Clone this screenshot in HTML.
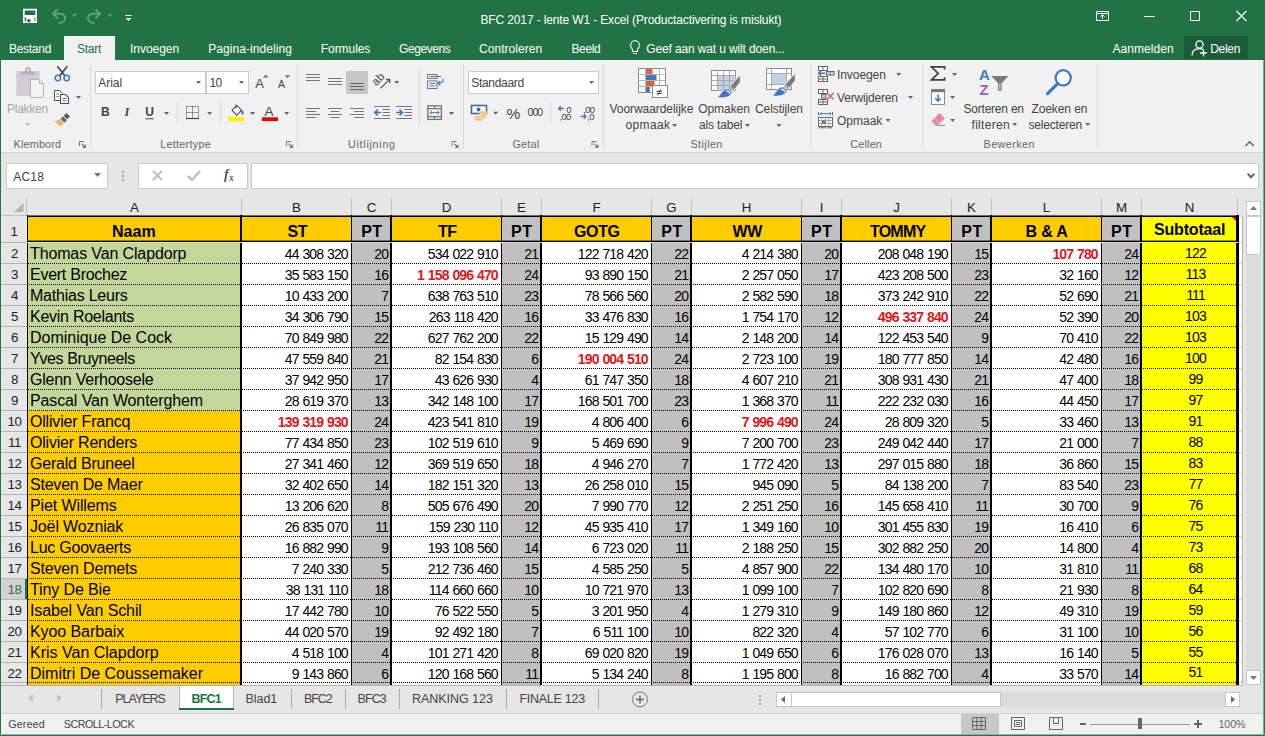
<!DOCTYPE html>
<html lang="nl"><head><meta charset="utf-8"><title>BFC 2017 - lente W1 - Excel</title>
<style>
html,body{margin:0;padding:0}
body{width:1265px;height:736px;overflow:hidden;background:#e6e6e6;font-family:"Liberation Sans",sans-serif}
#w{position:relative;width:1265px;height:736px;overflow:hidden;background:#e6e6e6}
#w section{position:absolute;left:0;top:0;width:1265px;height:736px}
#w div,#w svg,#w span{position:absolute;display:block}
.t{white-space:pre}
.serif{font-family:"Liberation Serif",serif}
.nu{letter-spacing:-0.85px;word-spacing:0.75px}
.n{letter-spacing:-0.35px}
.nm{letter-spacing:-0.1px}
.hb{letter-spacing:-0.2px}
.dot{background:repeating-linear-gradient(90deg,#000 0,#000 1px,transparent 1px,transparent 2px)}
.d2{background:repeating-linear-gradient(90deg,transparent 0,transparent 1px,#000 1px,#000 2px)}
</style></head>
<body><div id="w">
<section id="titlebar-and-ribbon">
<div style="left:0px;top:0px;width:1265px;height:60px;background:#217346;"></div>
<div style="left:64px;top:36px;width:51px;height:24px;background:#f1f1f1;"></div>
<div style="left:1184px;top:36px;width:64px;height:23px;background:#1a5c38;"></div>
<div style="left:0px;top:60px;width:1265px;height:92px;background:#f1f1f1;"></div>
<div style="left:0px;top:152px;width:1265px;height:1px;background:#d4d4d4;"></div>
<span class="t " style="top:12px;font-size:12px;line-height:16px;color:#fff;letter-spacing:-0.137px;left:480.50px;">BFC 2017 - lente W1 - Excel (Productactivering is mislukt)</span>
<span class="t " style="top:41px;font-size:12px;line-height:16px;color:#fff;letter-spacing:-0.285px;left:9.00px;">Bestand</span>
<span class="t " style="top:41px;font-size:12px;line-height:16px;color:#217346;letter-spacing:-0.259px;left:77.00px;">Start</span>
<span class="t " style="top:41px;font-size:12px;line-height:16px;color:#fff;letter-spacing:-0.043px;left:130.00px;">Invoegen</span>
<span class="t " style="top:41px;font-size:12px;line-height:16px;color:#fff;letter-spacing:0.071px;left:208.25px;">Pagina-indeling</span>
<span class="t " style="top:41px;font-size:12px;line-height:16px;color:#fff;letter-spacing:-0.058px;left:320.75px;">Formules</span>
<span class="t " style="top:41px;font-size:12px;line-height:16px;color:#fff;letter-spacing:-0.425px;left:399.00px;">Gegevens</span>
<span class="t " style="top:41px;font-size:12px;line-height:16px;color:#fff;letter-spacing:0.054px;left:479.00px;">Controleren</span>
<span class="t " style="top:41px;font-size:12px;line-height:16px;color:#fff;letter-spacing:-0.381px;left:571.50px;">Beeld</span>
<span class="t " style="top:41px;font-size:12px;line-height:16px;color:#fff;letter-spacing:-0.131px;left:646.25px;">Geef aan wat u wilt doen...</span>
<span class="t " style="top:41px;font-size:12px;line-height:16px;color:#fff;letter-spacing:0.065px;left:1112.50px;">Aanmelden</span>
<span class="t " style="top:41px;font-size:12px;line-height:16px;color:#fff;letter-spacing:-0.312px;left:1210.25px;">Delen</span>
<div style="left:90px;top:64px;width:1px;height:84px;background:#d8d8d8;"></div>
<div style="left:297px;top:64px;width:1px;height:84px;background:#d8d8d8;"></div>
<div style="left:463px;top:64px;width:1px;height:84px;background:#d8d8d8;"></div>
<div style="left:603px;top:64px;width:1px;height:84px;background:#d8d8d8;"></div>
<div style="left:810px;top:64px;width:1px;height:84px;background:#d8d8d8;"></div>
<div style="left:922px;top:64px;width:1px;height:84px;background:#d8d8d8;"></div>
<div style="left:1097px;top:64px;width:1px;height:84px;background:#d8d8d8;"></div>
<div style="left:177px;top:102px;width:1px;height:21px;background:#d8d8d8;"></div>
<div style="left:220px;top:102px;width:1px;height:21px;background:#d8d8d8;"></div>
<div style="left:419px;top:70px;width:1px;height:55px;background:#d8d8d8;"></div>
<div style="left:550px;top:102px;width:1px;height:21px;background:#d8d8d8;"></div>
<span class="t " style="top:137px;font-size:10.8px;line-height:14px;color:#666;letter-spacing:0.198px;left:13.50px;">Klembord</span>
<span class="t " style="top:137px;font-size:10.8px;line-height:14px;color:#666;letter-spacing:0.277px;left:160.20px;">Lettertype</span>
<span class="t " style="top:137px;font-size:10.8px;line-height:14px;color:#666;letter-spacing:0.699px;left:348.00px;">Uitlijning</span>
<span class="t " style="top:137px;font-size:10.8px;line-height:14px;color:#666;letter-spacing:0.198px;left:512.50px;">Getal</span>
<span class="t " style="top:137px;font-size:10.8px;line-height:14px;color:#666;letter-spacing:0.411px;left:690.50px;">Stijlen</span>
<span class="t " style="top:137px;font-size:10.8px;line-height:14px;color:#666;letter-spacing:0.198px;left:850.25px;">Cellen</span>
<span class="t " style="top:137px;font-size:10.8px;line-height:14px;color:#666;letter-spacing:0.436px;left:983.50px;">Bewerken</span>
<span class="t " style="top:101px;font-size:12px;line-height:16px;color:#a6a6a6;letter-spacing:-0.272px;left:7.00px;">Plakken</span>
<span class="t " style="top:101px;font-size:12px;line-height:16px;color:#444;letter-spacing:-0.061px;left:609.50px;">Voorwaardelijke</span>
<span class="t " style="top:117px;font-size:12px;line-height:16px;color:#444;letter-spacing:0.349px;left:625.50px;">opmaak</span>
<span class="t " style="top:101px;font-size:12px;line-height:16px;color:#444;letter-spacing:-0.069px;left:698.25px;">Opmaken</span>
<span class="t " style="top:117px;font-size:12px;line-height:16px;color:#444;letter-spacing:-0.156px;left:699.00px;">als tabel</span>
<span class="t " style="top:101px;font-size:12px;line-height:16px;color:#444;letter-spacing:-0.089px;left:755.00px;">Celstijlen</span>
<span class="t " style="top:67px;font-size:12px;line-height:16px;color:#444;letter-spacing:-0.074px;left:837.00px;">Invoegen</span>
<span class="t " style="top:90px;font-size:12px;line-height:16px;color:#444;letter-spacing:-0.173px;left:837.00px;">Verwijderen</span>
<span class="t " style="top:113px;font-size:12px;line-height:16px;color:#444;letter-spacing:-0.010px;left:837.00px;">Opmaak</span>
<span class="t " style="top:101px;font-size:12px;line-height:16px;color:#444;letter-spacing:-0.220px;left:963.50px;">Sorteren en</span>
<span class="t " style="top:117px;font-size:12px;line-height:16px;color:#444;letter-spacing:0.296px;left:971.50px;">filteren</span>
<span class="t " style="top:101px;font-size:12px;line-height:16px;color:#444;letter-spacing:-0.102px;left:1031.50px;">Zoeken en</span>
<span class="t " style="top:117px;font-size:12px;line-height:16px;color:#444;letter-spacing:-0.178px;left:1028.50px;">selecteren</span>
<div style="left:95px;top:71px;width:109px;height:21px;background:#fff;border:1px solid #cbcbcb;"></div>
<div style="left:206px;top:71px;width:41px;height:21px;background:#fff;border:1px solid #cbcbcb;"></div>
<div style="left:468px;top:71px;width:129px;height:21px;background:#fff;border:1px solid #cbcbcb;"></div>
<span class="t " style="top:75px;font-size:12px;line-height:16px;color:#444;letter-spacing:-0.043px;left:98.25px;">Arial</span>
<span class="t " style="top:75px;font-size:12px;line-height:16px;color:#444;letter-spacing:-0.655px;left:209.50px;">10</span>
<span class="t " style="top:75px;font-size:12px;line-height:16px;color:#444;letter-spacing:-0.316px;left:471.25px;">Standaard</span>
<svg style="left:196.2px;top:81.3px" width="5" height="3" viewBox="0 0 5 3"><path d="M0 0H5L2.5 3Z" fill="#666"/></svg>
<svg style="left:239.2px;top:81.3px" width="5" height="3" viewBox="0 0 5 3"><path d="M0 0H5L2.5 3Z" fill="#666"/></svg>
<svg style="left:589.0px;top:81.3px" width="5" height="3" viewBox="0 0 5 3"><path d="M0 0H5L2.5 3Z" fill="#666"/></svg>
</section>
<section id="formula-bar">
<div style="left:6px;top:163px;width:100px;height:24px;background:#fff;border:1px solid #cbcbcb;"></div>
<div style="left:138px;top:163px;width:108px;height:24px;background:#fff;border:1px solid #cbcbcb;"></div>
<div style="left:251px;top:163px;width:1006px;height:24px;background:#fff;border:1px solid #cbcbcb;"></div>
<span class="t " style="top:169px;font-size:12px;line-height:16px;color:#444;letter-spacing:0.192px;left:13.25px;">AC18</span>
<svg style="left:94.0px;top:173.0px" width="7" height="4" viewBox="0 0 7 4"><path d="M0 0H7L3.5 4Z" fill="#777"/></svg>
<div style="left:122px;top:171px;width:2px;height:2px;background:#a9a9a9;"></div>
<div style="left:122px;top:175px;width:2px;height:2px;background:#a9a9a9;"></div>
<div style="left:122px;top:179px;width:2px;height:2px;background:#a9a9a9;"></div>
<svg style="left:152px;top:170px" width="11" height="11" viewBox="0 0 11 11"><path d="M1 1L10 10M10 1L1 10" stroke="#bdbdbd" stroke-width="1.9" fill="none"/></svg>
<svg style="left:187px;top:170px" width="14" height="11" viewBox="0 0 14 11"><path d="M1 6L5 10L13 1" stroke="#c2c2c2" stroke-width="2.5" fill="none"/></svg>
<span class="t serif" style="top:166px;font-size:14px;line-height:18px;color:#555;font-weight:700;font-style:italic;left:224.00px;">f</span>
<span class="t serif" style="top:172px;font-size:9.5px;line-height:12px;color:#555;font-weight:700;font-style:italic;left:229.00px;">x</span>
<svg style="left:1247px;top:173px" width="8" height="6" viewBox="0 0 8 6"><path d="M0.7 0.7L4 4.2L7.3 0.7" stroke="#666" stroke-width="2" fill="none"/></svg>
</section>
<section id="worksheet-grid">
<div style="left:26px;top:198px;width:1px;height:18px;background:#c3c3c3;"></div>
<div style="left:241px;top:198px;width:1px;height:18px;background:#c3c3c3;"></div>
<div style="left:351px;top:198px;width:1px;height:18px;background:#c3c3c3;"></div>
<div style="left:391px;top:198px;width:1px;height:18px;background:#c3c3c3;"></div>
<div style="left:501px;top:198px;width:1px;height:18px;background:#c3c3c3;"></div>
<div style="left:541px;top:198px;width:1px;height:18px;background:#c3c3c3;"></div>
<div style="left:651px;top:198px;width:1px;height:18px;background:#c3c3c3;"></div>
<div style="left:691px;top:198px;width:1px;height:18px;background:#c3c3c3;"></div>
<div style="left:801px;top:198px;width:1px;height:18px;background:#c3c3c3;"></div>
<div style="left:841px;top:198px;width:1px;height:18px;background:#c3c3c3;"></div>
<div style="left:951px;top:198px;width:1px;height:18px;background:#c3c3c3;"></div>
<div style="left:991px;top:198px;width:1px;height:18px;background:#c3c3c3;"></div>
<div style="left:1101px;top:198px;width:1px;height:18px;background:#c3c3c3;"></div>
<div style="left:1141px;top:198px;width:1px;height:18px;background:#c3c3c3;"></div>
<div style="left:1237px;top:198px;width:1px;height:18px;background:#c3c3c3;"></div>
<span class="t " style="top:199px;font-size:13.33px;line-height:17px;color:#222;left:-65.50px;width:400px;text-align:center;">A</span>
<span class="t " style="top:199px;font-size:13.33px;line-height:17px;color:#222;left:96.50px;width:400px;text-align:center;">B</span>
<span class="t " style="top:199px;font-size:13.33px;line-height:17px;color:#222;left:171.50px;width:400px;text-align:center;">C</span>
<span class="t " style="top:199px;font-size:13.33px;line-height:17px;color:#222;left:246.50px;width:400px;text-align:center;">D</span>
<span class="t " style="top:199px;font-size:13.33px;line-height:17px;color:#222;left:321.50px;width:400px;text-align:center;">E</span>
<span class="t " style="top:199px;font-size:13.33px;line-height:17px;color:#222;left:396.50px;width:400px;text-align:center;">F</span>
<span class="t " style="top:199px;font-size:13.33px;line-height:17px;color:#222;left:471.50px;width:400px;text-align:center;">G</span>
<span class="t " style="top:199px;font-size:13.33px;line-height:17px;color:#222;left:546.50px;width:400px;text-align:center;">H</span>
<span class="t " style="top:199px;font-size:13.33px;line-height:17px;color:#222;left:621.50px;width:400px;text-align:center;">I</span>
<span class="t " style="top:199px;font-size:13.33px;line-height:17px;color:#222;left:696.50px;width:400px;text-align:center;">J</span>
<span class="t " style="top:199px;font-size:13.33px;line-height:17px;color:#222;left:771.50px;width:400px;text-align:center;">K</span>
<span class="t " style="top:199px;font-size:13.33px;line-height:17px;color:#222;left:846.50px;width:400px;text-align:center;">L</span>
<span class="t " style="top:199px;font-size:13.33px;line-height:17px;color:#222;left:921.50px;width:400px;text-align:center;">M</span>
<span class="t " style="top:199px;font-size:13.33px;line-height:17px;color:#222;left:989.50px;width:400px;text-align:center;">N</span>
<svg style="left:14px;top:203px" width="9.5" height="9" viewBox="0 0 9.5 9"><path d="M9.5 0V9H0Z" fill="#b4b4b4"/></svg>
<div style="left:28px;top:217px;width:1214px;height:468px;background:#fff;"></div>
<div style="left:1242px;top:216px;width:1px;height:469px;background:#b0b0b0;"></div>
<div style="left:1239px;top:242px;width:3px;height:1px;background:#d4d4d4;"></div>
<div style="left:1239px;top:263px;width:3px;height:1px;background:#d4d4d4;"></div>
<div style="left:1239px;top:284px;width:3px;height:1px;background:#d4d4d4;"></div>
<div style="left:1239px;top:305px;width:3px;height:1px;background:#d4d4d4;"></div>
<div style="left:1239px;top:326px;width:3px;height:1px;background:#d4d4d4;"></div>
<div style="left:1239px;top:347px;width:3px;height:1px;background:#d4d4d4;"></div>
<div style="left:1239px;top:368px;width:3px;height:1px;background:#d4d4d4;"></div>
<div style="left:1239px;top:389px;width:3px;height:1px;background:#d4d4d4;"></div>
<div style="left:1239px;top:410px;width:3px;height:1px;background:#d4d4d4;"></div>
<div style="left:1239px;top:431px;width:3px;height:1px;background:#d4d4d4;"></div>
<div style="left:1239px;top:452px;width:3px;height:1px;background:#d4d4d4;"></div>
<div style="left:1239px;top:473px;width:3px;height:1px;background:#d4d4d4;"></div>
<div style="left:1239px;top:494px;width:3px;height:1px;background:#d4d4d4;"></div>
<div style="left:1239px;top:515px;width:3px;height:1px;background:#d4d4d4;"></div>
<div style="left:1239px;top:536px;width:3px;height:1px;background:#d4d4d4;"></div>
<div style="left:1239px;top:557px;width:3px;height:1px;background:#d4d4d4;"></div>
<div style="left:1239px;top:578px;width:3px;height:1px;background:#d4d4d4;"></div>
<div style="left:1239px;top:599px;width:3px;height:1px;background:#d4d4d4;"></div>
<div style="left:1239px;top:620px;width:3px;height:1px;background:#d4d4d4;"></div>
<div style="left:1239px;top:641px;width:3px;height:1px;background:#d4d4d4;"></div>
<div style="left:1239px;top:662px;width:3px;height:1px;background:#d4d4d4;"></div>
<div style="left:1239px;top:682px;width:3px;height:1px;background:#d4d4d4;"></div>
<div style="left:28px;top:217px;width:214px;height:25px;background:#ffcc00;"></div>
<div style="left:242px;top:217px;width:110px;height:25px;background:#ffcc00;"></div>
<div style="left:352px;top:217px;width:40px;height:25px;background:#c0c0c0;"></div>
<div style="left:392px;top:217px;width:110px;height:25px;background:#ffcc00;"></div>
<div style="left:502px;top:217px;width:40px;height:25px;background:#c0c0c0;"></div>
<div style="left:542px;top:217px;width:110px;height:25px;background:#ffcc00;"></div>
<div style="left:652px;top:217px;width:40px;height:25px;background:#c0c0c0;"></div>
<div style="left:692px;top:217px;width:110px;height:25px;background:#ffcc00;"></div>
<div style="left:802px;top:217px;width:40px;height:25px;background:#c0c0c0;"></div>
<div style="left:842px;top:217px;width:110px;height:25px;background:#ffcc00;"></div>
<div style="left:952px;top:217px;width:40px;height:25px;background:#c0c0c0;"></div>
<div style="left:992px;top:217px;width:110px;height:25px;background:#ffcc00;"></div>
<div style="left:1102px;top:217px;width:40px;height:25px;background:#c0c0c0;"></div>
<div style="left:1142px;top:217px;width:96px;height:25px;background:#ffff00;"></div>
<div style="left:28px;top:243px;width:214px;height:168px;background:#c4d79b;"></div>
<div style="left:28px;top:411px;width:214px;height:274px;background:#ffcc00;"></div>
<div style="left:352px;top:243px;width:40px;height:442px;background:#c0c0c0;"></div>
<div style="left:502px;top:243px;width:40px;height:442px;background:#c0c0c0;"></div>
<div style="left:652px;top:243px;width:40px;height:442px;background:#c0c0c0;"></div>
<div style="left:802px;top:243px;width:40px;height:442px;background:#c0c0c0;"></div>
<div style="left:952px;top:243px;width:40px;height:442px;background:#c0c0c0;"></div>
<div style="left:1102px;top:243px;width:40px;height:442px;background:#c0c0c0;"></div>
<div style="left:1142px;top:243px;width:96px;height:442px;background:#ffff00;"></div>
<div style="left:28px;top:242px;width:1210px;height:1px;background:rgba(255,255,255,.45);"></div>
<div class="dot" style="left:28px;top:263px;width:1208px;height:1px"></div>
<div class="dot d2" style="left:28px;top:284px;width:1208px;height:1px"></div>
<div class="dot" style="left:28px;top:305px;width:1208px;height:1px"></div>
<div class="dot d2" style="left:28px;top:326px;width:1208px;height:1px"></div>
<div class="dot" style="left:28px;top:347px;width:1208px;height:1px"></div>
<div class="dot d2" style="left:28px;top:368px;width:1208px;height:1px"></div>
<div class="dot" style="left:28px;top:389px;width:1208px;height:1px"></div>
<div class="dot d2" style="left:28px;top:410px;width:1208px;height:1px"></div>
<div class="dot" style="left:28px;top:431px;width:1208px;height:1px"></div>
<div class="dot d2" style="left:28px;top:452px;width:1208px;height:1px"></div>
<div class="dot" style="left:28px;top:473px;width:1208px;height:1px"></div>
<div class="dot d2" style="left:28px;top:494px;width:1208px;height:1px"></div>
<div class="dot" style="left:28px;top:515px;width:1208px;height:1px"></div>
<div class="dot d2" style="left:28px;top:536px;width:1208px;height:1px"></div>
<div class="dot" style="left:28px;top:557px;width:1208px;height:1px"></div>
<div class="dot d2" style="left:28px;top:578px;width:1208px;height:1px"></div>
<div class="dot" style="left:28px;top:599px;width:1208px;height:1px"></div>
<div class="dot d2" style="left:28px;top:620px;width:1208px;height:1px"></div>
<div class="dot" style="left:28px;top:641px;width:1208px;height:1px"></div>
<div class="dot d2" style="left:28px;top:662px;width:1208px;height:1px"></div>
<div class="dot d2" style="left:28px;top:682px;width:1208px;height:1px"></div>
<div style="left:27px;top:216px;width:1212px;height:1px;background:#000;"></div>
<div style="left:27px;top:215px;width:1212px;height:1px;background:rgba(0,0,0,.55);"></div>
<div style="left:27px;top:241px;width:1212px;height:1px;background:#000;"></div>
<div style="left:27px;top:240px;width:1212px;height:1px;background:rgba(0,0,0,.4);"></div>
<div style="left:27px;top:215px;width:1px;height:470px;background:#000;"></div>
<div style="left:240px;top:215px;width:2px;height:470px;background:#000;"></div>
<div style="left:351px;top:215px;width:1px;height:470px;background:#000;"></div>
<div style="left:390px;top:215px;width:2px;height:470px;background:#000;"></div>
<div style="left:501px;top:215px;width:1px;height:470px;background:#000;"></div>
<div style="left:540px;top:215px;width:2px;height:470px;background:#000;"></div>
<div style="left:651px;top:215px;width:1px;height:470px;background:#000;"></div>
<div style="left:690px;top:215px;width:2px;height:470px;background:#000;"></div>
<div style="left:801px;top:215px;width:1px;height:470px;background:#000;"></div>
<div style="left:840px;top:215px;width:2px;height:470px;background:#000;"></div>
<div style="left:951px;top:215px;width:1px;height:470px;background:#000;"></div>
<div style="left:990px;top:215px;width:2px;height:470px;background:#000;"></div>
<div style="left:1101px;top:215px;width:1px;height:470px;background:#000;"></div>
<div style="left:1140px;top:215px;width:2px;height:470px;background:#000;"></div>
<div style="left:1236px;top:215px;width:3px;height:470px;background:#000;"></div>
<div style="left:27px;top:242px;width:215px;height:1px;background:#c4d79b;"></div>
<div style="left:242px;top:242px;width:110px;height:1px;background:#fff;"></div>
<div style="left:352px;top:242px;width:40px;height:1px;background:#c0c0c0;"></div>
<div style="left:392px;top:242px;width:110px;height:1px;background:#fff;"></div>
<div style="left:502px;top:242px;width:40px;height:1px;background:#c0c0c0;"></div>
<div style="left:542px;top:242px;width:110px;height:1px;background:#fff;"></div>
<div style="left:652px;top:242px;width:40px;height:1px;background:#c0c0c0;"></div>
<div style="left:692px;top:242px;width:110px;height:1px;background:#fff;"></div>
<div style="left:802px;top:242px;width:40px;height:1px;background:#c0c0c0;"></div>
<div style="left:842px;top:242px;width:110px;height:1px;background:#fff;"></div>
<div style="left:952px;top:242px;width:40px;height:1px;background:#c0c0c0;"></div>
<div style="left:992px;top:242px;width:110px;height:1px;background:#fff;"></div>
<div style="left:1102px;top:242px;width:40px;height:1px;background:#c0c0c0;"></div>
<div style="left:1142px;top:242px;width:96px;height:1px;background:#ffff00;"></div>
<div style="left:27px;top:242px;width:1212px;height:1px;background:rgba(255,255,255,.3);"></div>
<svg style="left:1232px;top:217px" width="4" height="4" viewBox="0 0 4 4"><path d="M0 0H4V4Z" fill="#e00000"/></svg>
<div style="left:1px;top:215px;width:26px;height:1px;background:#c3c3c3;"></div>
<div style="left:1px;top:242px;width:26px;height:1px;background:#b4b4b4;"></div>
<div style="left:1px;top:263px;width:26px;height:1px;background:#b4b4b4;"></div>
<div style="left:1px;top:284px;width:26px;height:1px;background:#b4b4b4;"></div>
<div style="left:1px;top:305px;width:26px;height:1px;background:#b4b4b4;"></div>
<div style="left:1px;top:326px;width:26px;height:1px;background:#b4b4b4;"></div>
<div style="left:1px;top:347px;width:26px;height:1px;background:#b4b4b4;"></div>
<div style="left:1px;top:368px;width:26px;height:1px;background:#b4b4b4;"></div>
<div style="left:1px;top:389px;width:26px;height:1px;background:#b4b4b4;"></div>
<div style="left:1px;top:410px;width:26px;height:1px;background:#b4b4b4;"></div>
<div style="left:1px;top:431px;width:26px;height:1px;background:#b4b4b4;"></div>
<div style="left:1px;top:452px;width:26px;height:1px;background:#b4b4b4;"></div>
<div style="left:1px;top:473px;width:26px;height:1px;background:#b4b4b4;"></div>
<div style="left:1px;top:494px;width:26px;height:1px;background:#b4b4b4;"></div>
<div style="left:1px;top:515px;width:26px;height:1px;background:#b4b4b4;"></div>
<div style="left:1px;top:536px;width:26px;height:1px;background:#b4b4b4;"></div>
<div style="left:1px;top:557px;width:26px;height:1px;background:#b4b4b4;"></div>
<div style="left:1px;top:578px;width:26px;height:1px;background:#b4b4b4;"></div>
<div style="left:1px;top:599px;width:26px;height:1px;background:#b4b4b4;"></div>
<div style="left:1px;top:620px;width:26px;height:1px;background:#b4b4b4;"></div>
<div style="left:1px;top:641px;width:26px;height:1px;background:#b4b4b4;"></div>
<div style="left:1px;top:662px;width:26px;height:1px;background:#b4b4b4;"></div>
<div style="left:1px;top:682px;width:26px;height:1px;background:#b4b4b4;"></div>
<div style="left:1px;top:685px;width:26px;height:1px;background:#b4b4b4;"></div>
<div style="left:1px;top:579px;width:26px;height:20px;background:#d2d2d2;"></div>
<div style="left:25px;top:579px;width:2px;height:20px;background:#217346;"></div>
<span class="t n" style="top:223px;font-size:13.33px;line-height:17px;color:#222;left:-186.00px;width:400px;text-align:center;">1</span>
<span class="t n" style="top:245px;font-size:13.33px;line-height:17px;color:#222;left:-185.50px;width:400px;text-align:center;">2</span>
<span class="t n" style="top:266px;font-size:13.33px;line-height:17px;color:#222;left:-185.50px;width:400px;text-align:center;">3</span>
<span class="t n" style="top:287px;font-size:13.33px;line-height:17px;color:#222;left:-185.50px;width:400px;text-align:center;">4</span>
<span class="t n" style="top:308px;font-size:13.33px;line-height:17px;color:#222;left:-185.50px;width:400px;text-align:center;">5</span>
<span class="t n" style="top:329px;font-size:13.33px;line-height:17px;color:#222;left:-185.50px;width:400px;text-align:center;">6</span>
<span class="t n" style="top:350px;font-size:13.33px;line-height:17px;color:#222;left:-185.50px;width:400px;text-align:center;">7</span>
<span class="t n" style="top:371px;font-size:13.33px;line-height:17px;color:#222;left:-185.50px;width:400px;text-align:center;">8</span>
<span class="t n" style="top:392px;font-size:13.33px;line-height:17px;color:#222;left:-185.50px;width:400px;text-align:center;">9</span>
<span class="t n" style="top:413px;font-size:13.33px;line-height:17px;color:#222;left:-185.50px;width:400px;text-align:center;">10</span>
<span class="t n" style="top:434px;font-size:13.33px;line-height:17px;color:#222;left:-185.50px;width:400px;text-align:center;">11</span>
<span class="t n" style="top:455px;font-size:13.33px;line-height:17px;color:#222;left:-185.50px;width:400px;text-align:center;">12</span>
<span class="t n" style="top:476px;font-size:13.33px;line-height:17px;color:#222;left:-185.50px;width:400px;text-align:center;">13</span>
<span class="t n" style="top:497px;font-size:13.33px;line-height:17px;color:#222;left:-185.50px;width:400px;text-align:center;">14</span>
<span class="t n" style="top:518px;font-size:13.33px;line-height:17px;color:#222;left:-185.50px;width:400px;text-align:center;">15</span>
<span class="t n" style="top:539px;font-size:13.33px;line-height:17px;color:#222;left:-185.50px;width:400px;text-align:center;">16</span>
<span class="t n" style="top:560px;font-size:13.33px;line-height:17px;color:#222;left:-185.50px;width:400px;text-align:center;">17</span>
<span class="t n" style="top:581px;font-size:13.33px;line-height:17px;color:#217346;left:-185.50px;width:400px;text-align:center;">18</span>
<span class="t n" style="top:602px;font-size:13.33px;line-height:17px;color:#222;left:-185.50px;width:400px;text-align:center;">19</span>
<span class="t n" style="top:623px;font-size:13.33px;line-height:17px;color:#222;left:-185.50px;width:400px;text-align:center;">20</span>
<span class="t n" style="top:644px;font-size:13.33px;line-height:17px;color:#222;left:-185.50px;width:400px;text-align:center;">21</span>
<span class="t n" style="top:665px;font-size:13.33px;line-height:17px;color:#222;left:-185.50px;width:400px;text-align:center;">22</span>
<span class="t " style="top:221px;font-size:16px;line-height:21px;color:#000;font-weight:700;letter-spacing:0.055px;left:111.90px;">Naam</span>
<span class="t " style="top:221px;font-size:16px;line-height:21px;color:#000;font-weight:700;letter-spacing:-0.327px;left:287.50px;">ST</span>
<span class="t " style="top:221px;font-size:16px;line-height:21px;color:#000;font-weight:700;letter-spacing:0.423px;left:361.20px;">PT</span>
<span class="t " style="top:221px;font-size:16px;line-height:21px;color:#000;font-weight:700;letter-spacing:-0.623px;left:438.10px;">TF</span>
<span class="t " style="top:221px;font-size:16px;line-height:21px;color:#000;font-weight:700;letter-spacing:0.523px;left:511.10px;">PT</span>
<span class="t " style="top:221px;font-size:16px;line-height:21px;color:#000;font-weight:700;letter-spacing:-0.352px;left:574.00px;">GOTG</span>
<span class="t " style="top:221px;font-size:16px;line-height:21px;color:#000;font-weight:700;letter-spacing:0.523px;left:661.20px;">PT</span>
<span class="t " style="top:221px;font-size:16px;line-height:21px;color:#000;font-weight:700;letter-spacing:-0.252px;left:732.40px;">WW</span>
<span class="t " style="top:221px;font-size:16px;line-height:21px;color:#000;font-weight:700;letter-spacing:0.573px;left:811.00px;">PT</span>
<span class="t " style="top:221px;font-size:16px;line-height:21px;color:#000;font-weight:700;letter-spacing:-0.793px;left:870.00px;">TOMMY</span>
<span class="t " style="top:221px;font-size:16px;line-height:21px;color:#000;font-weight:700;letter-spacing:0.523px;left:961.20px;">PT</span>
<span class="t " style="top:221px;font-size:16px;line-height:21px;color:#000;font-weight:700;letter-spacing:-0.174px;left:1025.50px;">B &amp; A</span>
<span class="t " style="top:221px;font-size:16px;line-height:21px;color:#000;font-weight:700;letter-spacing:0.573px;left:1111.00px;">PT</span>
<span class="t " style="top:219px;font-size:16px;line-height:21px;color:#000;font-weight:700;letter-spacing:-0.177px;left:1154.00px;">Subtotaal</span>
<span class="t " style="top:243px;font-size:16px;line-height:21px;color:#000;letter-spacing:-0.132px;left:30.00px;">Thomas Van Clapdorp</span>
<span class="t nu" style="top:245px;font-size:14px;line-height:18px;color:#000;right:917.20px;">44 308 320</span>
<span class="t nu" style="top:245px;font-size:14px;line-height:18px;color:#000;right:876.80px;">20</span>
<span class="t nu" style="top:245px;font-size:14px;line-height:18px;color:#000;right:767.20px;">534 022 910</span>
<span class="t nu" style="top:245px;font-size:14px;line-height:18px;color:#000;right:726.80px;">21</span>
<span class="t nu" style="top:245px;font-size:14px;line-height:18px;color:#000;right:617.20px;">122 718 420</span>
<span class="t nu" style="top:245px;font-size:14px;line-height:18px;color:#000;right:576.80px;">22</span>
<span class="t nu" style="top:245px;font-size:14px;line-height:18px;color:#000;right:467.20px;">4 214 380</span>
<span class="t nu" style="top:245px;font-size:14px;line-height:18px;color:#000;right:426.80px;">20</span>
<span class="t nu" style="top:245px;font-size:14px;line-height:18px;color:#000;right:317.20px;">208 048 190</span>
<span class="t nu" style="top:245px;font-size:14px;line-height:18px;color:#000;right:276.80px;">15</span>
<span class="t nu" style="top:245px;font-size:14px;line-height:18px;color:#dc1822;font-weight:700;right:167.20px;">107 780</span>
<span class="t nu" style="top:245px;font-size:14px;line-height:18px;color:#000;right:126.80px;">24</span>
<span class="t nu" style="top:244px;font-size:14px;line-height:18px;color:#000;left:995.50px;width:400px;text-align:center;">122</span>
<span class="t " style="top:264px;font-size:16px;line-height:21px;color:#000;letter-spacing:-0.260px;left:30.00px;">Evert Brochez</span>
<span class="t nu" style="top:266px;font-size:14px;line-height:18px;color:#000;right:917.20px;">35 583 150</span>
<span class="t nu" style="top:266px;font-size:14px;line-height:18px;color:#000;right:876.80px;">16</span>
<span class="t nu" style="top:266px;font-size:14px;line-height:18px;color:#dc1822;font-weight:700;right:767.20px;">1 158 096 470</span>
<span class="t nu" style="top:266px;font-size:14px;line-height:18px;color:#000;right:726.80px;">24</span>
<span class="t nu" style="top:266px;font-size:14px;line-height:18px;color:#000;right:617.20px;">93 890 150</span>
<span class="t nu" style="top:266px;font-size:14px;line-height:18px;color:#000;right:576.80px;">21</span>
<span class="t nu" style="top:266px;font-size:14px;line-height:18px;color:#000;right:467.20px;">2 257 050</span>
<span class="t nu" style="top:266px;font-size:14px;line-height:18px;color:#000;right:426.80px;">17</span>
<span class="t nu" style="top:266px;font-size:14px;line-height:18px;color:#000;right:317.20px;">423 208 500</span>
<span class="t nu" style="top:266px;font-size:14px;line-height:18px;color:#000;right:276.80px;">23</span>
<span class="t nu" style="top:266px;font-size:14px;line-height:18px;color:#000;right:167.20px;">32 160</span>
<span class="t nu" style="top:266px;font-size:14px;line-height:18px;color:#000;right:126.80px;">12</span>
<span class="t nu" style="top:265px;font-size:14px;line-height:18px;color:#000;left:995.50px;width:400px;text-align:center;">113</span>
<span class="t " style="top:285px;font-size:16px;line-height:21px;color:#000;letter-spacing:-0.223px;left:30.00px;">Mathias Leurs</span>
<span class="t nu" style="top:287px;font-size:14px;line-height:18px;color:#000;right:917.20px;">10 433 200</span>
<span class="t nu" style="top:287px;font-size:14px;line-height:18px;color:#000;right:876.80px;">7</span>
<span class="t nu" style="top:287px;font-size:14px;line-height:18px;color:#000;right:767.20px;">638 763 510</span>
<span class="t nu" style="top:287px;font-size:14px;line-height:18px;color:#000;right:726.80px;">23</span>
<span class="t nu" style="top:287px;font-size:14px;line-height:18px;color:#000;right:617.20px;">78 566 560</span>
<span class="t nu" style="top:287px;font-size:14px;line-height:18px;color:#000;right:576.80px;">20</span>
<span class="t nu" style="top:287px;font-size:14px;line-height:18px;color:#000;right:467.20px;">2 582 590</span>
<span class="t nu" style="top:287px;font-size:14px;line-height:18px;color:#000;right:426.80px;">18</span>
<span class="t nu" style="top:287px;font-size:14px;line-height:18px;color:#000;right:317.20px;">373 242 910</span>
<span class="t nu" style="top:287px;font-size:14px;line-height:18px;color:#000;right:276.80px;">22</span>
<span class="t nu" style="top:287px;font-size:14px;line-height:18px;color:#000;right:167.20px;">52 690</span>
<span class="t nu" style="top:287px;font-size:14px;line-height:18px;color:#000;right:126.80px;">21</span>
<span class="t nu" style="top:286px;font-size:14px;line-height:18px;color:#000;left:995.50px;width:400px;text-align:center;">111</span>
<span class="t " style="top:306px;font-size:16px;line-height:21px;color:#000;letter-spacing:-0.259px;left:30.00px;">Kevin Roelants</span>
<span class="t nu" style="top:308px;font-size:14px;line-height:18px;color:#000;right:917.20px;">34 306 790</span>
<span class="t nu" style="top:308px;font-size:14px;line-height:18px;color:#000;right:876.80px;">15</span>
<span class="t nu" style="top:308px;font-size:14px;line-height:18px;color:#000;right:767.20px;">263 118 420</span>
<span class="t nu" style="top:308px;font-size:14px;line-height:18px;color:#000;right:726.80px;">16</span>
<span class="t nu" style="top:308px;font-size:14px;line-height:18px;color:#000;right:617.20px;">33 476 830</span>
<span class="t nu" style="top:308px;font-size:14px;line-height:18px;color:#000;right:576.80px;">16</span>
<span class="t nu" style="top:308px;font-size:14px;line-height:18px;color:#000;right:467.20px;">1 754 170</span>
<span class="t nu" style="top:308px;font-size:14px;line-height:18px;color:#000;right:426.80px;">12</span>
<span class="t nu" style="top:308px;font-size:14px;line-height:18px;color:#dc1822;font-weight:700;right:317.20px;">496 337 840</span>
<span class="t nu" style="top:308px;font-size:14px;line-height:18px;color:#000;right:276.80px;">24</span>
<span class="t nu" style="top:308px;font-size:14px;line-height:18px;color:#000;right:167.20px;">52 390</span>
<span class="t nu" style="top:308px;font-size:14px;line-height:18px;color:#000;right:126.80px;">20</span>
<span class="t nu" style="top:307px;font-size:14px;line-height:18px;color:#000;left:995.50px;width:400px;text-align:center;">103</span>
<span class="t " style="top:327px;font-size:16px;line-height:21px;color:#000;letter-spacing:-0.017px;left:30.00px;">Dominique De Cock</span>
<span class="t nu" style="top:329px;font-size:14px;line-height:18px;color:#000;right:917.20px;">70 849 980</span>
<span class="t nu" style="top:329px;font-size:14px;line-height:18px;color:#000;right:876.80px;">22</span>
<span class="t nu" style="top:329px;font-size:14px;line-height:18px;color:#000;right:767.20px;">627 762 200</span>
<span class="t nu" style="top:329px;font-size:14px;line-height:18px;color:#000;right:726.80px;">22</span>
<span class="t nu" style="top:329px;font-size:14px;line-height:18px;color:#000;right:617.20px;">15 129 490</span>
<span class="t nu" style="top:329px;font-size:14px;line-height:18px;color:#000;right:576.80px;">14</span>
<span class="t nu" style="top:329px;font-size:14px;line-height:18px;color:#000;right:467.20px;">2 148 200</span>
<span class="t nu" style="top:329px;font-size:14px;line-height:18px;color:#000;right:426.80px;">14</span>
<span class="t nu" style="top:329px;font-size:14px;line-height:18px;color:#000;right:317.20px;">122 453 540</span>
<span class="t nu" style="top:329px;font-size:14px;line-height:18px;color:#000;right:276.80px;">9</span>
<span class="t nu" style="top:329px;font-size:14px;line-height:18px;color:#000;right:167.20px;">70 410</span>
<span class="t nu" style="top:329px;font-size:14px;line-height:18px;color:#000;right:126.80px;">22</span>
<span class="t nu" style="top:328px;font-size:14px;line-height:18px;color:#000;left:995.50px;width:400px;text-align:center;">103</span>
<span class="t " style="top:348px;font-size:16px;line-height:21px;color:#000;letter-spacing:-0.392px;left:30.00px;">Yves Bruyneels</span>
<span class="t nu" style="top:350px;font-size:14px;line-height:18px;color:#000;right:917.20px;">47 559 840</span>
<span class="t nu" style="top:350px;font-size:14px;line-height:18px;color:#000;right:876.80px;">21</span>
<span class="t nu" style="top:350px;font-size:14px;line-height:18px;color:#000;right:767.20px;">82 154 830</span>
<span class="t nu" style="top:350px;font-size:14px;line-height:18px;color:#000;right:726.80px;">6</span>
<span class="t nu" style="top:350px;font-size:14px;line-height:18px;color:#dc1822;font-weight:700;right:617.20px;">190 004 510</span>
<span class="t nu" style="top:350px;font-size:14px;line-height:18px;color:#000;right:576.80px;">24</span>
<span class="t nu" style="top:350px;font-size:14px;line-height:18px;color:#000;right:467.20px;">2 723 100</span>
<span class="t nu" style="top:350px;font-size:14px;line-height:18px;color:#000;right:426.80px;">19</span>
<span class="t nu" style="top:350px;font-size:14px;line-height:18px;color:#000;right:317.20px;">180 777 850</span>
<span class="t nu" style="top:350px;font-size:14px;line-height:18px;color:#000;right:276.80px;">14</span>
<span class="t nu" style="top:350px;font-size:14px;line-height:18px;color:#000;right:167.20px;">42 480</span>
<span class="t nu" style="top:350px;font-size:14px;line-height:18px;color:#000;right:126.80px;">16</span>
<span class="t nu" style="top:349px;font-size:14px;line-height:18px;color:#000;left:995.50px;width:400px;text-align:center;">100</span>
<span class="t " style="top:369px;font-size:16px;line-height:21px;color:#000;letter-spacing:-0.238px;left:30.00px;">Glenn Verhoosele</span>
<span class="t nu" style="top:371px;font-size:14px;line-height:18px;color:#000;right:917.20px;">37 942 950</span>
<span class="t nu" style="top:371px;font-size:14px;line-height:18px;color:#000;right:876.80px;">17</span>
<span class="t nu" style="top:371px;font-size:14px;line-height:18px;color:#000;right:767.20px;">43 626 930</span>
<span class="t nu" style="top:371px;font-size:14px;line-height:18px;color:#000;right:726.80px;">4</span>
<span class="t nu" style="top:371px;font-size:14px;line-height:18px;color:#000;right:617.20px;">61 747 350</span>
<span class="t nu" style="top:371px;font-size:14px;line-height:18px;color:#000;right:576.80px;">18</span>
<span class="t nu" style="top:371px;font-size:14px;line-height:18px;color:#000;right:467.20px;">4 607 210</span>
<span class="t nu" style="top:371px;font-size:14px;line-height:18px;color:#000;right:426.80px;">21</span>
<span class="t nu" style="top:371px;font-size:14px;line-height:18px;color:#000;right:317.20px;">308 931 430</span>
<span class="t nu" style="top:371px;font-size:14px;line-height:18px;color:#000;right:276.80px;">21</span>
<span class="t nu" style="top:371px;font-size:14px;line-height:18px;color:#000;right:167.20px;">47 400</span>
<span class="t nu" style="top:371px;font-size:14px;line-height:18px;color:#000;right:126.80px;">18</span>
<span class="t nu" style="top:370px;font-size:14px;line-height:18px;color:#000;left:995.50px;width:400px;text-align:center;">99</span>
<span class="t " style="top:390px;font-size:16px;line-height:21px;color:#000;letter-spacing:-0.119px;left:30.00px;">Pascal Van Wonterghem</span>
<span class="t nu" style="top:392px;font-size:14px;line-height:18px;color:#000;right:917.20px;">28 619 370</span>
<span class="t nu" style="top:392px;font-size:14px;line-height:18px;color:#000;right:876.80px;">13</span>
<span class="t nu" style="top:392px;font-size:14px;line-height:18px;color:#000;right:767.20px;">342 148 100</span>
<span class="t nu" style="top:392px;font-size:14px;line-height:18px;color:#000;right:726.80px;">17</span>
<span class="t nu" style="top:392px;font-size:14px;line-height:18px;color:#000;right:617.20px;">168 501 700</span>
<span class="t nu" style="top:392px;font-size:14px;line-height:18px;color:#000;right:576.80px;">23</span>
<span class="t nu" style="top:392px;font-size:14px;line-height:18px;color:#000;right:467.20px;">1 368 370</span>
<span class="t nu" style="top:392px;font-size:14px;line-height:18px;color:#000;right:426.80px;">11</span>
<span class="t nu" style="top:392px;font-size:14px;line-height:18px;color:#000;right:317.20px;">222 232 030</span>
<span class="t nu" style="top:392px;font-size:14px;line-height:18px;color:#000;right:276.80px;">16</span>
<span class="t nu" style="top:392px;font-size:14px;line-height:18px;color:#000;right:167.20px;">44 450</span>
<span class="t nu" style="top:392px;font-size:14px;line-height:18px;color:#000;right:126.80px;">17</span>
<span class="t nu" style="top:391px;font-size:14px;line-height:18px;color:#000;left:995.50px;width:400px;text-align:center;">97</span>
<span class="t " style="top:411px;font-size:16px;line-height:21px;color:#000;letter-spacing:-0.196px;left:30.00px;">Ollivier Francq</span>
<span class="t nu" style="top:413px;font-size:14px;line-height:18px;color:#dc1822;font-weight:700;right:917.20px;">139 319 930</span>
<span class="t nu" style="top:413px;font-size:14px;line-height:18px;color:#000;right:876.80px;">24</span>
<span class="t nu" style="top:413px;font-size:14px;line-height:18px;color:#000;right:767.20px;">423 541 810</span>
<span class="t nu" style="top:413px;font-size:14px;line-height:18px;color:#000;right:726.80px;">19</span>
<span class="t nu" style="top:413px;font-size:14px;line-height:18px;color:#000;right:617.20px;">4 806 400</span>
<span class="t nu" style="top:413px;font-size:14px;line-height:18px;color:#000;right:576.80px;">6</span>
<span class="t nu" style="top:413px;font-size:14px;line-height:18px;color:#dc1822;font-weight:700;right:467.20px;">7 996 490</span>
<span class="t nu" style="top:413px;font-size:14px;line-height:18px;color:#000;right:426.80px;">24</span>
<span class="t nu" style="top:413px;font-size:14px;line-height:18px;color:#000;right:317.20px;">28 809 320</span>
<span class="t nu" style="top:413px;font-size:14px;line-height:18px;color:#000;right:276.80px;">5</span>
<span class="t nu" style="top:413px;font-size:14px;line-height:18px;color:#000;right:167.20px;">33 460</span>
<span class="t nu" style="top:413px;font-size:14px;line-height:18px;color:#000;right:126.80px;">13</span>
<span class="t nu" style="top:412px;font-size:14px;line-height:18px;color:#000;left:995.50px;width:400px;text-align:center;">91</span>
<span class="t " style="top:432px;font-size:16px;line-height:21px;color:#000;letter-spacing:-0.211px;left:30.00px;">Olivier Renders</span>
<span class="t nu" style="top:434px;font-size:14px;line-height:18px;color:#000;right:917.20px;">77 434 850</span>
<span class="t nu" style="top:434px;font-size:14px;line-height:18px;color:#000;right:876.80px;">23</span>
<span class="t nu" style="top:434px;font-size:14px;line-height:18px;color:#000;right:767.20px;">102 519 610</span>
<span class="t nu" style="top:434px;font-size:14px;line-height:18px;color:#000;right:726.80px;">9</span>
<span class="t nu" style="top:434px;font-size:14px;line-height:18px;color:#000;right:617.20px;">5 469 690</span>
<span class="t nu" style="top:434px;font-size:14px;line-height:18px;color:#000;right:576.80px;">9</span>
<span class="t nu" style="top:434px;font-size:14px;line-height:18px;color:#000;right:467.20px;">7 200 700</span>
<span class="t nu" style="top:434px;font-size:14px;line-height:18px;color:#000;right:426.80px;">23</span>
<span class="t nu" style="top:434px;font-size:14px;line-height:18px;color:#000;right:317.20px;">249 042 440</span>
<span class="t nu" style="top:434px;font-size:14px;line-height:18px;color:#000;right:276.80px;">17</span>
<span class="t nu" style="top:434px;font-size:14px;line-height:18px;color:#000;right:167.20px;">21 000</span>
<span class="t nu" style="top:434px;font-size:14px;line-height:18px;color:#000;right:126.80px;">7</span>
<span class="t nu" style="top:433px;font-size:14px;line-height:18px;color:#000;left:995.50px;width:400px;text-align:center;">88</span>
<span class="t " style="top:453px;font-size:16px;line-height:21px;color:#000;letter-spacing:-0.216px;left:30.00px;">Gerald Bruneel</span>
<span class="t nu" style="top:455px;font-size:14px;line-height:18px;color:#000;right:917.20px;">27 341 460</span>
<span class="t nu" style="top:455px;font-size:14px;line-height:18px;color:#000;right:876.80px;">12</span>
<span class="t nu" style="top:455px;font-size:14px;line-height:18px;color:#000;right:767.20px;">369 519 650</span>
<span class="t nu" style="top:455px;font-size:14px;line-height:18px;color:#000;right:726.80px;">18</span>
<span class="t nu" style="top:455px;font-size:14px;line-height:18px;color:#000;right:617.20px;">4 946 270</span>
<span class="t nu" style="top:455px;font-size:14px;line-height:18px;color:#000;right:576.80px;">7</span>
<span class="t nu" style="top:455px;font-size:14px;line-height:18px;color:#000;right:467.20px;">1 772 420</span>
<span class="t nu" style="top:455px;font-size:14px;line-height:18px;color:#000;right:426.80px;">13</span>
<span class="t nu" style="top:455px;font-size:14px;line-height:18px;color:#000;right:317.20px;">297 015 880</span>
<span class="t nu" style="top:455px;font-size:14px;line-height:18px;color:#000;right:276.80px;">18</span>
<span class="t nu" style="top:455px;font-size:14px;line-height:18px;color:#000;right:167.20px;">36 860</span>
<span class="t nu" style="top:455px;font-size:14px;line-height:18px;color:#000;right:126.80px;">15</span>
<span class="t nu" style="top:454px;font-size:14px;line-height:18px;color:#000;left:995.50px;width:400px;text-align:center;">83</span>
<span class="t " style="top:474px;font-size:16px;line-height:21px;color:#000;letter-spacing:-0.215px;left:30.00px;">Steven De Maer</span>
<span class="t nu" style="top:476px;font-size:14px;line-height:18px;color:#000;right:917.20px;">32 402 650</span>
<span class="t nu" style="top:476px;font-size:14px;line-height:18px;color:#000;right:876.80px;">14</span>
<span class="t nu" style="top:476px;font-size:14px;line-height:18px;color:#000;right:767.20px;">182 151 320</span>
<span class="t nu" style="top:476px;font-size:14px;line-height:18px;color:#000;right:726.80px;">13</span>
<span class="t nu" style="top:476px;font-size:14px;line-height:18px;color:#000;right:617.20px;">26 258 010</span>
<span class="t nu" style="top:476px;font-size:14px;line-height:18px;color:#000;right:576.80px;">15</span>
<span class="t nu" style="top:476px;font-size:14px;line-height:18px;color:#000;right:467.20px;">945 090</span>
<span class="t nu" style="top:476px;font-size:14px;line-height:18px;color:#000;right:426.80px;">5</span>
<span class="t nu" style="top:476px;font-size:14px;line-height:18px;color:#000;right:317.20px;">84 138 200</span>
<span class="t nu" style="top:476px;font-size:14px;line-height:18px;color:#000;right:276.80px;">7</span>
<span class="t nu" style="top:476px;font-size:14px;line-height:18px;color:#000;right:167.20px;">83 540</span>
<span class="t nu" style="top:476px;font-size:14px;line-height:18px;color:#000;right:126.80px;">23</span>
<span class="t nu" style="top:475px;font-size:14px;line-height:18px;color:#000;left:995.50px;width:400px;text-align:center;">77</span>
<span class="t " style="top:495px;font-size:16px;line-height:21px;color:#000;letter-spacing:-0.110px;left:30.00px;">Piet Willems</span>
<span class="t nu" style="top:497px;font-size:14px;line-height:18px;color:#000;right:917.20px;">13 206 620</span>
<span class="t nu" style="top:497px;font-size:14px;line-height:18px;color:#000;right:876.80px;">8</span>
<span class="t nu" style="top:497px;font-size:14px;line-height:18px;color:#000;right:767.20px;">505 676 490</span>
<span class="t nu" style="top:497px;font-size:14px;line-height:18px;color:#000;right:726.80px;">20</span>
<span class="t nu" style="top:497px;font-size:14px;line-height:18px;color:#000;right:617.20px;">7 990 770</span>
<span class="t nu" style="top:497px;font-size:14px;line-height:18px;color:#000;right:576.80px;">12</span>
<span class="t nu" style="top:497px;font-size:14px;line-height:18px;color:#000;right:467.20px;">2 251 250</span>
<span class="t nu" style="top:497px;font-size:14px;line-height:18px;color:#000;right:426.80px;">16</span>
<span class="t nu" style="top:497px;font-size:14px;line-height:18px;color:#000;right:317.20px;">145 658 410</span>
<span class="t nu" style="top:497px;font-size:14px;line-height:18px;color:#000;right:276.80px;">11</span>
<span class="t nu" style="top:497px;font-size:14px;line-height:18px;color:#000;right:167.20px;">30 700</span>
<span class="t nu" style="top:497px;font-size:14px;line-height:18px;color:#000;right:126.80px;">9</span>
<span class="t nu" style="top:496px;font-size:14px;line-height:18px;color:#000;left:995.50px;width:400px;text-align:center;">76</span>
<span class="t " style="top:516px;font-size:16px;line-height:21px;color:#000;letter-spacing:-0.138px;left:30.00px;">Joël Wozniak</span>
<span class="t nu" style="top:518px;font-size:14px;line-height:18px;color:#000;right:917.20px;">26 835 070</span>
<span class="t nu" style="top:518px;font-size:14px;line-height:18px;color:#000;right:876.80px;">11</span>
<span class="t nu" style="top:518px;font-size:14px;line-height:18px;color:#000;right:767.20px;">159 230 110</span>
<span class="t nu" style="top:518px;font-size:14px;line-height:18px;color:#000;right:726.80px;">12</span>
<span class="t nu" style="top:518px;font-size:14px;line-height:18px;color:#000;right:617.20px;">45 935 410</span>
<span class="t nu" style="top:518px;font-size:14px;line-height:18px;color:#000;right:576.80px;">17</span>
<span class="t nu" style="top:518px;font-size:14px;line-height:18px;color:#000;right:467.20px;">1 349 160</span>
<span class="t nu" style="top:518px;font-size:14px;line-height:18px;color:#000;right:426.80px;">10</span>
<span class="t nu" style="top:518px;font-size:14px;line-height:18px;color:#000;right:317.20px;">301 455 830</span>
<span class="t nu" style="top:518px;font-size:14px;line-height:18px;color:#000;right:276.80px;">19</span>
<span class="t nu" style="top:518px;font-size:14px;line-height:18px;color:#000;right:167.20px;">16 410</span>
<span class="t nu" style="top:518px;font-size:14px;line-height:18px;color:#000;right:126.80px;">6</span>
<span class="t nu" style="top:517px;font-size:14px;line-height:18px;color:#000;left:995.50px;width:400px;text-align:center;">75</span>
<span class="t " style="top:537px;font-size:16px;line-height:21px;color:#000;letter-spacing:-0.243px;left:30.00px;">Luc Goovaerts</span>
<span class="t nu" style="top:539px;font-size:14px;line-height:18px;color:#000;right:917.20px;">16 882 990</span>
<span class="t nu" style="top:539px;font-size:14px;line-height:18px;color:#000;right:876.80px;">9</span>
<span class="t nu" style="top:539px;font-size:14px;line-height:18px;color:#000;right:767.20px;">193 108 560</span>
<span class="t nu" style="top:539px;font-size:14px;line-height:18px;color:#000;right:726.80px;">14</span>
<span class="t nu" style="top:539px;font-size:14px;line-height:18px;color:#000;right:617.20px;">6 723 020</span>
<span class="t nu" style="top:539px;font-size:14px;line-height:18px;color:#000;right:576.80px;">11</span>
<span class="t nu" style="top:539px;font-size:14px;line-height:18px;color:#000;right:467.20px;">2 188 250</span>
<span class="t nu" style="top:539px;font-size:14px;line-height:18px;color:#000;right:426.80px;">15</span>
<span class="t nu" style="top:539px;font-size:14px;line-height:18px;color:#000;right:317.20px;">302 882 250</span>
<span class="t nu" style="top:539px;font-size:14px;line-height:18px;color:#000;right:276.80px;">20</span>
<span class="t nu" style="top:539px;font-size:14px;line-height:18px;color:#000;right:167.20px;">14 800</span>
<span class="t nu" style="top:539px;font-size:14px;line-height:18px;color:#000;right:126.80px;">4</span>
<span class="t nu" style="top:538px;font-size:14px;line-height:18px;color:#000;left:995.50px;width:400px;text-align:center;">73</span>
<span class="t " style="top:558px;font-size:16px;line-height:21px;color:#000;letter-spacing:-0.176px;left:30.00px;">Steven Demets</span>
<span class="t nu" style="top:560px;font-size:14px;line-height:18px;color:#000;right:917.20px;">7 240 330</span>
<span class="t nu" style="top:560px;font-size:14px;line-height:18px;color:#000;right:876.80px;">5</span>
<span class="t nu" style="top:560px;font-size:14px;line-height:18px;color:#000;right:767.20px;">212 736 460</span>
<span class="t nu" style="top:560px;font-size:14px;line-height:18px;color:#000;right:726.80px;">15</span>
<span class="t nu" style="top:560px;font-size:14px;line-height:18px;color:#000;right:617.20px;">4 585 250</span>
<span class="t nu" style="top:560px;font-size:14px;line-height:18px;color:#000;right:576.80px;">5</span>
<span class="t nu" style="top:560px;font-size:14px;line-height:18px;color:#000;right:467.20px;">4 857 900</span>
<span class="t nu" style="top:560px;font-size:14px;line-height:18px;color:#000;right:426.80px;">22</span>
<span class="t nu" style="top:560px;font-size:14px;line-height:18px;color:#000;right:317.20px;">134 480 170</span>
<span class="t nu" style="top:560px;font-size:14px;line-height:18px;color:#000;right:276.80px;">10</span>
<span class="t nu" style="top:560px;font-size:14px;line-height:18px;color:#000;right:167.20px;">31 810</span>
<span class="t nu" style="top:560px;font-size:14px;line-height:18px;color:#000;right:126.80px;">11</span>
<span class="t nu" style="top:559px;font-size:14px;line-height:18px;color:#000;left:995.50px;width:400px;text-align:center;">68</span>
<span class="t " style="top:579px;font-size:16px;line-height:21px;color:#000;letter-spacing:-0.119px;left:30.00px;">Tiny De Bie</span>
<span class="t nu" style="top:581px;font-size:14px;line-height:18px;color:#000;right:917.20px;">38 131 110</span>
<span class="t nu" style="top:581px;font-size:14px;line-height:18px;color:#000;right:876.80px;">18</span>
<span class="t nu" style="top:581px;font-size:14px;line-height:18px;color:#000;right:767.20px;">114 660 660</span>
<span class="t nu" style="top:581px;font-size:14px;line-height:18px;color:#000;right:726.80px;">10</span>
<span class="t nu" style="top:581px;font-size:14px;line-height:18px;color:#000;right:617.20px;">10 721 970</span>
<span class="t nu" style="top:581px;font-size:14px;line-height:18px;color:#000;right:576.80px;">13</span>
<span class="t nu" style="top:581px;font-size:14px;line-height:18px;color:#000;right:467.20px;">1 099 100</span>
<span class="t nu" style="top:581px;font-size:14px;line-height:18px;color:#000;right:426.80px;">7</span>
<span class="t nu" style="top:581px;font-size:14px;line-height:18px;color:#000;right:317.20px;">102 820 690</span>
<span class="t nu" style="top:581px;font-size:14px;line-height:18px;color:#000;right:276.80px;">8</span>
<span class="t nu" style="top:581px;font-size:14px;line-height:18px;color:#000;right:167.20px;">21 930</span>
<span class="t nu" style="top:581px;font-size:14px;line-height:18px;color:#000;right:126.80px;">8</span>
<span class="t nu" style="top:580px;font-size:14px;line-height:18px;color:#000;left:995.50px;width:400px;text-align:center;">64</span>
<span class="t " style="top:600px;font-size:16px;line-height:21px;color:#000;letter-spacing:-0.109px;left:30.00px;">Isabel Van Schil</span>
<span class="t nu" style="top:602px;font-size:14px;line-height:18px;color:#000;right:917.20px;">17 442 780</span>
<span class="t nu" style="top:602px;font-size:14px;line-height:18px;color:#000;right:876.80px;">10</span>
<span class="t nu" style="top:602px;font-size:14px;line-height:18px;color:#000;right:767.20px;">76 522 550</span>
<span class="t nu" style="top:602px;font-size:14px;line-height:18px;color:#000;right:726.80px;">5</span>
<span class="t nu" style="top:602px;font-size:14px;line-height:18px;color:#000;right:617.20px;">3 201 950</span>
<span class="t nu" style="top:602px;font-size:14px;line-height:18px;color:#000;right:576.80px;">4</span>
<span class="t nu" style="top:602px;font-size:14px;line-height:18px;color:#000;right:467.20px;">1 279 310</span>
<span class="t nu" style="top:602px;font-size:14px;line-height:18px;color:#000;right:426.80px;">9</span>
<span class="t nu" style="top:602px;font-size:14px;line-height:18px;color:#000;right:317.20px;">149 180 860</span>
<span class="t nu" style="top:602px;font-size:14px;line-height:18px;color:#000;right:276.80px;">12</span>
<span class="t nu" style="top:602px;font-size:14px;line-height:18px;color:#000;right:167.20px;">49 310</span>
<span class="t nu" style="top:602px;font-size:14px;line-height:18px;color:#000;right:126.80px;">19</span>
<span class="t nu" style="top:601px;font-size:14px;line-height:18px;color:#000;left:995.50px;width:400px;text-align:center;">59</span>
<span class="t " style="top:621px;font-size:16px;line-height:21px;color:#000;letter-spacing:-0.081px;left:30.00px;">Kyoo Barbaix</span>
<span class="t nu" style="top:623px;font-size:14px;line-height:18px;color:#000;right:917.20px;">44 020 570</span>
<span class="t nu" style="top:623px;font-size:14px;line-height:18px;color:#000;right:876.80px;">19</span>
<span class="t nu" style="top:623px;font-size:14px;line-height:18px;color:#000;right:767.20px;">92 492 180</span>
<span class="t nu" style="top:623px;font-size:14px;line-height:18px;color:#000;right:726.80px;">7</span>
<span class="t nu" style="top:623px;font-size:14px;line-height:18px;color:#000;right:617.20px;">6 511 100</span>
<span class="t nu" style="top:623px;font-size:14px;line-height:18px;color:#000;right:576.80px;">10</span>
<span class="t nu" style="top:623px;font-size:14px;line-height:18px;color:#000;right:467.20px;">822 320</span>
<span class="t nu" style="top:623px;font-size:14px;line-height:18px;color:#000;right:426.80px;">4</span>
<span class="t nu" style="top:623px;font-size:14px;line-height:18px;color:#000;right:317.20px;">57 102 770</span>
<span class="t nu" style="top:623px;font-size:14px;line-height:18px;color:#000;right:276.80px;">6</span>
<span class="t nu" style="top:623px;font-size:14px;line-height:18px;color:#000;right:167.20px;">31 100</span>
<span class="t nu" style="top:623px;font-size:14px;line-height:18px;color:#000;right:126.80px;">10</span>
<span class="t nu" style="top:622px;font-size:14px;line-height:18px;color:#000;left:995.50px;width:400px;text-align:center;">56</span>
<span class="t " style="top:642px;font-size:16px;line-height:21px;color:#000;left:30.00px;">Kris Van Clapdorp</span>
<span class="t nu" style="top:644px;font-size:14px;line-height:18px;color:#000;right:917.20px;">4 518 100</span>
<span class="t nu" style="top:644px;font-size:14px;line-height:18px;color:#000;right:876.80px;">4</span>
<span class="t nu" style="top:644px;font-size:14px;line-height:18px;color:#000;right:767.20px;">101 271 420</span>
<span class="t nu" style="top:644px;font-size:14px;line-height:18px;color:#000;right:726.80px;">8</span>
<span class="t nu" style="top:644px;font-size:14px;line-height:18px;color:#000;right:617.20px;">69 020 820</span>
<span class="t nu" style="top:644px;font-size:14px;line-height:18px;color:#000;right:576.80px;">19</span>
<span class="t nu" style="top:644px;font-size:14px;line-height:18px;color:#000;right:467.20px;">1 049 650</span>
<span class="t nu" style="top:644px;font-size:14px;line-height:18px;color:#000;right:426.80px;">6</span>
<span class="t nu" style="top:644px;font-size:14px;line-height:18px;color:#000;right:317.20px;">176 028 070</span>
<span class="t nu" style="top:644px;font-size:14px;line-height:18px;color:#000;right:276.80px;">13</span>
<span class="t nu" style="top:644px;font-size:14px;line-height:18px;color:#000;right:167.20px;">16 140</span>
<span class="t nu" style="top:644px;font-size:14px;line-height:18px;color:#000;right:126.80px;">5</span>
<span class="t nu" style="top:643px;font-size:14px;line-height:18px;color:#000;left:995.50px;width:400px;text-align:center;">55</span>
<span class="t " style="top:663px;font-size:16px;line-height:21px;color:#000;letter-spacing:-0.017px;left:30.00px;">Dimitri De Coussemaker</span>
<span class="t nu" style="top:665px;font-size:14px;line-height:18px;color:#000;right:917.20px;">9 143 860</span>
<span class="t nu" style="top:665px;font-size:14px;line-height:18px;color:#000;right:876.80px;">6</span>
<span class="t nu" style="top:665px;font-size:14px;line-height:18px;color:#000;right:767.20px;">120 168 560</span>
<span class="t nu" style="top:665px;font-size:14px;line-height:18px;color:#000;right:726.80px;">11</span>
<span class="t nu" style="top:665px;font-size:14px;line-height:18px;color:#000;right:617.20px;">5 134 240</span>
<span class="t nu" style="top:665px;font-size:14px;line-height:18px;color:#000;right:576.80px;">8</span>
<span class="t nu" style="top:665px;font-size:14px;line-height:18px;color:#000;right:467.20px;">1 195 800</span>
<span class="t nu" style="top:665px;font-size:14px;line-height:18px;color:#000;right:426.80px;">8</span>
<span class="t nu" style="top:665px;font-size:14px;line-height:18px;color:#000;right:317.20px;">16 882 700</span>
<span class="t nu" style="top:665px;font-size:14px;line-height:18px;color:#000;right:276.80px;">4</span>
<span class="t nu" style="top:665px;font-size:14px;line-height:18px;color:#000;right:167.20px;">33 570</span>
<span class="t nu" style="top:665px;font-size:14px;line-height:18px;color:#000;right:126.80px;">14</span>
<span class="t nu" style="top:663px;font-size:14px;line-height:18px;color:#000;left:995.50px;width:400px;text-align:center;">51</span>
</section>
<section id="scrollbars-sheet-tabs-statusbar">
<div style="left:1px;top:685px;width:1262px;height:1px;background:#b4b4b4;"></div>
<div style="left:1243px;top:198px;width:20px;height:488px;background:#e6e6e6;"></div>
<div style="left:1px;top:686px;width:1262px;height:27px;background:#e6e6e6;"></div>
<div style="left:1246px;top:216px;width:15px;height:454px;background:#dcdcdc;"></div>
<div style="left:792px;top:692px;width:433px;height:15px;background:#dcdcdc;"></div>
<div style="left:1246px;top:201px;width:13px;height:13px;background:#fff;border:1px solid #c6c6c6;"></div>
<svg style="left:1250px;top:206px" width="7" height="4" viewBox="0 0 7 4"><path d="M0 4H7L3.5 0Z" fill="#777"/></svg>
<div style="left:1246px;top:216px;width:13px;height:37px;background:#fff;border:1px solid #c6c6c6;"></div>
<div style="left:1246px;top:670px;width:13px;height:13px;background:#fff;border:1px solid #c6c6c6;"></div>
<svg style="left:1250px;top:676px" width="7" height="4" viewBox="0 0 7 4"><path d="M0 0H7L3.5 4Z" fill="#777"/></svg>
<div style="left:776px;top:692px;width:14px;height:13px;background:#fff;border:1px solid #c6c6c6;"></div>
<svg style="left:781px;top:696px" width="4" height="7" viewBox="0 0 4 7"><path d="M4 0V7L0 3.5Z" fill="#6a6a6a"/></svg>
<div style="left:791px;top:692px;width:208px;height:13px;background:#fff;border:1px solid #c6c6c6;"></div>
<div style="left:1225px;top:692px;width:13px;height:13px;background:#fff;border:1px solid #c6c6c6;"></div>
<svg style="left:1231px;top:696px" width="4" height="7" viewBox="0 0 4 7"><path d="M0 0V7L4 3.5Z" fill="#6a6a6a"/></svg>
<div style="left:759px;top:695px;width:2px;height:2px;background:#a9a9a9;"></div>
<div style="left:759px;top:699px;width:2px;height:2px;background:#a9a9a9;"></div>
<div style="left:759px;top:703px;width:2px;height:2px;background:#a9a9a9;"></div>
<svg style="left:28px;top:694px" width="5" height="8" viewBox="0 0 5 8"><path d="M5 0V8L0 4Z" fill="#c3c3c3"/></svg>
<svg style="left:57px;top:694px" width="5" height="8" viewBox="0 0 5 8"><path d="M0 0V8L5 4Z" fill="#c3c3c3"/></svg>
<div style="left:101px;top:689px;width:1px;height:20px;background:#ababab;"></div>
<div style="left:291px;top:689px;width:1px;height:20px;background:#ababab;"></div>
<div style="left:345px;top:689px;width:1px;height:20px;background:#ababab;"></div>
<div style="left:399px;top:689px;width:1px;height:20px;background:#ababab;"></div>
<div style="left:506px;top:689px;width:1px;height:20px;background:#ababab;"></div>
<div style="left:598px;top:689px;width:1px;height:20px;background:#ababab;"></div>
<div style="left:179px;top:686px;width:55px;height:22px;background:#b9b9b9;"></div>
<div style="left:180px;top:686px;width:53px;height:22px;background:#fff;"></div>
<div style="left:179px;top:708px;width:55px;height:2px;background:#217346;"></div>
<span class="t " style="top:691px;font-size:12.5px;line-height:16px;color:#444;letter-spacing:-1.021px;left:115.30px;">PLAYERS</span>
<span class="t " style="top:691px;font-size:12.5px;line-height:16px;color:#217346;font-weight:700;letter-spacing:-0.839px;left:191.50px;">BFC1</span>
<span class="t " style="top:691px;font-size:12.5px;line-height:16px;color:#444;letter-spacing:-0.037px;left:245.50px;">Blad1</span>
<span class="t " style="top:691px;font-size:12.5px;line-height:16px;color:#444;letter-spacing:-1.101px;left:304.00px;">BFC2</span>
<span class="t " style="top:691px;font-size:12.5px;line-height:16px;color:#444;letter-spacing:-0.913px;left:357.50px;">BFC3</span>
<span class="t " style="top:691px;font-size:12.5px;line-height:16px;color:#444;letter-spacing:-0.044px;left:412.00px;">RANKING 123</span>
<span class="t " style="top:691px;font-size:12.5px;line-height:16px;color:#444;letter-spacing:-0.279px;left:519.50px;">FINALE 123</span>
<svg style="left:631px;top:691px" width="18" height="18" viewBox="0 0 18 18"><circle cx="9" cy="8.5" r="7.5" fill="none" stroke="#777" stroke-width="1"/><path d="M9 4.5V12.5M5 8.5H13" stroke="#666" stroke-width="1.5"/></svg>
<div style="left:1px;top:713px;width:1262px;height:21px;background:#f1f1f1;"></div>
<div style="left:1px;top:713px;width:1262px;height:1px;background:#d0d0d0;"></div>
<span class="t " style="top:717px;font-size:10.8px;line-height:14px;color:#444;letter-spacing:0.089px;left:8.25px;">Gereed</span>
<span class="t " style="top:717px;font-size:10.8px;line-height:14px;color:#444;letter-spacing:-0.537px;left:63.75px;">SCROLL-LOCK</span>
<span class="t " style="top:717px;font-size:10.8px;line-height:14px;color:#666;letter-spacing:-0.144px;left:1218.50px;">100%</span>
<div style="left:961px;top:714px;width:38px;height:20px;background:#c8c8c8;"></div>
<svg style="left:972px;top:717px" width="14" height="13" viewBox="0 0 14 13"><path d="M0.5 0.5H13.5V12.5H0.5ZM0.5 4.5H13.5M0.5 8.5H13.5M4.8 0.5V12.5M9.2 0.5V12.5" fill="none" stroke="#666" stroke-width="1"/></svg>
<svg style="left:1011px;top:717px" width="14" height="13" viewBox="0 0 14 13"><path d="M0.5 0.5H13.5V12.5H0.5ZM3.5 3.5H10.5V9.5H3.5ZM5 5.5H9M5 7.5H9" fill="none" stroke="#666" stroke-width="1"/></svg>
<svg style="left:1049px;top:717px" width="14" height="13" viewBox="0 0 14 13"><path d="M0.5 0.5H13.5V12.5H0.5M0.5 12.5V0.5M4.5 0.5V6.5H9.5V0.5" fill="none" stroke="#666" stroke-width="1"/></svg>
<div style="left:1080px;top:723px;width:6px;height:2px;background:#666;"></div>
<div style="left:1090px;top:723.5px;width:100px;height:1px;background:#999;"></div>
<div style="left:1138px;top:718px;width:4px;height:11px;background:#666;"></div>
<div style="left:1194px;top:723px;width:8px;height:2px;background:#666;"></div>
<div style="left:1197px;top:720px;width:2px;height:8px;background:#666;"></div>
</section>
<section id="window-frame">
<div style="left:0px;top:60px;width:1px;height:676px;background:#217346;"></div>
<div style="left:1263px;top:60px;width:1px;height:676px;background:#7fa892;"></div>
<div style="left:1264px;top:60px;width:1px;height:676px;background:#217346;"></div>
<div style="left:0px;top:734px;width:1265px;height:1px;background:#8fb3a0;"></div>
<div style="left:0px;top:735px;width:1265px;height:1px;background:#217346;"></div>
</section>
<section id="ribbon-icons">
<svg style="left:0;top:0" width="1265" height="152" viewBox="0 0 1265 152" font-family="Liberation Sans, sans-serif"><path d="M23.85 9.65H36.15V22.15H23.85Z" fill="none" stroke="#fff" stroke-width="1.7" /><rect x="24" y="15" width="12" height="2.4" fill="#fff" /><rect x="26.2" y="17" width="8.2" height="5.5" fill="#fff" /><rect x="27.3" y="19.2" width="3.2" height="3.0" fill="#217346" /><path d="M57.5 10.5L53 15L57.5 19.5M53.5 15H60.5A4.5 4.5 0 0 1 60.5 24H58.5" fill="none" stroke="#5f9f7d" stroke-width="2.0" transform="translate(0,-1.3)"/><path d="M72.0 14.0H77.0L74.5 17.0Z" fill="#5f9f7d" /><path d="M95.5 10.5L100 15L95.5 19.5M99.5 15H92.5A4.5 4.5 0 0 0 92.5 24H94.5" fill="none" stroke="#5f9f7d" stroke-width="2.0" transform="translate(0,-1.3)"/><path d="M107.2 14.0H112.2L109.7 17.0Z" fill="#5f9f7d" /><path d="M125.5 15.5H131.5" fill="none" stroke="#fff" stroke-width="1" /><path d="M125.5 17.9H131.5L128.5 21.1Z" fill="#fff" /><path d="M1096.5 11.5H1108.5V20.5H1096.5ZM1096.5 13.5H1108.5" fill="none" stroke="#fff" stroke-width="1" /><path d="M1102.5 19V15M1100.3 16.8L1102.5 14.6L1104.7 16.8" fill="none" stroke="#fff" stroke-width="1" /><path d="M1144 16.5H1154.5" fill="none" stroke="#fff" stroke-width="1" /><rect x="1190.5" y="11.5" width="9" height="9" fill="none" stroke="#fff" stroke-width="1" /><path d="M1236.5 11L1246.5 21M1246.5 11L1236.5 21" fill="none" stroke="#fff" stroke-width="1.1" /><path d="M632.5 51.5V50C632.5 48.5 630.6 47.6 630.6 45.2A4.4 4.4 0 0 1 639.4 45.2C639.4 47.6 637.5 48.5 637.5 50V51.5ZM633 53.5H637" fill="none" stroke="#fff" stroke-width="1.1" /><circle cx="1199.5" cy="44.5" r="3.6" fill="none" stroke="#fff" stroke-width="1.3"/><path d="M1192 55.5C1192 51 1195 48.6 1199.5 48.6C1201 48.6 1202 48.9 1203 49.4" fill="none" stroke="#fff" stroke-width="1.3" /><path d="M1203.5 49.5V56.5M1200 53H1207" fill="none" stroke="#fff" stroke-width="1.3" /><rect x="16.3" y="71" width="23.4" height="24.8" fill="#cfcdd1" /><path d="M21 74.8V71.5H25.2V69.8A2.8 2.8 0 0 1 30.8 69.8V71.5H35V74.8Z" fill="#b6b4b8" /><circle cx="28" cy="70.2" r="1.1" fill="#f1f1f1"/><path d="M30.5 79.5H39.5L43.5 83.5V97.5H30.5Z" fill="#f4f2f6" stroke="#b6b4b8" stroke-width="1" /><path d="M39.5 79.5V83.5H43.5" fill="none" stroke="#b6b4b8" stroke-width="1" /><path d="M25.0 123.3H30.0L27.5 126.10000000000001Z" fill="#b4b4b4" /><path d="M57.3 66.2L65.6 76.6M67.3 66.2L59 76.6" fill="none" stroke="#505050" stroke-width="1.8" /><circle cx="57.9" cy="78" r="2.7" fill="#e4eef9" stroke="#3f78c0" stroke-width="1.4"/><circle cx="66.7" cy="78" r="2.7" fill="#e4eef9" stroke="#3f78c0" stroke-width="1.4"/><path d="M54.5 90.5H59.5L62.5 93.5V100.5H54.5Z" fill="#fff" stroke="#505050" stroke-width="1" /><path d="M60.5 94.5H65.5L68.5 97.5V103.5H60.5Z" fill="#fff" stroke="#505050" stroke-width="1.1" /><path d="M56.5 94H59M56.5 96.5H59M62.5 98.5H66.5M62.5 100.8H66.5" fill="none" stroke="#3f78c0" stroke-width="1" /><path d="M76.0 96.0H81.0L78.5 99.0Z" fill="#666" /><path d="M66.5 113L70 116.5L67.2 119.3L63.7 115.8Z" fill="#5a5a5a" /><path d="M63 116.2L67 120.2L64.4 122.8L60.4 118.8Z" fill="#6a6a6a" /><path d="M60 119.3L64 123.3L60.3 126.8L54.5 121.2Z" fill="#eab85e" /><path d="M79.5 146V141.5H84" fill="none" stroke="#777" stroke-width="1" /><path d="M81.6 143.6L84.5 146.5" fill="none" stroke="#777" stroke-width="1.1" /><path d="M86 144V148H82Z" fill="#777" /><path d="M286.5 146V141.5H291" fill="none" stroke="#777" stroke-width="1" /><path d="M288.6 143.6L291.5 146.5" fill="none" stroke="#777" stroke-width="1.1" /><path d="M293 144V148H289Z" fill="#777" /><path d="M452.0 146V141.5H456.5" fill="none" stroke="#777" stroke-width="1" /><path d="M454.1 143.6L457.0 146.5" fill="none" stroke="#777" stroke-width="1.1" /><path d="M458.5 144V148H454.5Z" fill="#777" /><path d="M592.0 146V141.5H596.5" fill="none" stroke="#777" stroke-width="1" /><path d="M594.1 143.6L597.0 146.5" fill="none" stroke="#777" stroke-width="1.1" /><path d="M598.5 144V148H594.5Z" fill="#777" /><text x="255.2" y="87.8" font-size="13" fill="#444" font-weight="400" >A</text><path d="M263 77.6H268.4L265.7 74.6Z" fill="#3f78c0" /><text x="278" y="87.8" font-size="10.5" fill="#444" font-weight="400" >A</text><path d="M284.8 75.2H290.2L287.5 78.2Z" fill="#3f78c0" /><text x="101" y="116.4" font-size="12" fill="#444" font-weight="700" >B</text><text x="124.5" y="116.4" font-size="12.5" fill="#444" font-weight="700" font-style="italic" font-family="Liberation Serif">I</text><text x="145.3" y="116.4" font-size="12" fill="#444" font-weight="700" >U</text><path d="M145.5 118.8H153.7" fill="none" stroke="#444" stroke-width="1" /><path d="M164.0 112.0H169.0L166.5 115.0Z" fill="#666" /><path d="M186.5 106.5H198.5M186.5 112.5H198.5M186.5 106.5V118M192.5 106.5V118M198.5 106.5V118" fill="none" stroke="#444" stroke-width="1" stroke-dasharray="1 1"/><path d="M186 118.5H199" fill="none" stroke="#444" stroke-width="1.2" /><path d="M207.1 112.0H212.1L209.6 115.0Z" fill="#666" /><path d="M232 110.2L236.8 105.5L241.5 110.2L236.8 115.2Z" fill="#fff" stroke="#555" stroke-width="1.1" /><path d="M236 104.6V108.5" fill="none" stroke="#555" stroke-width="1.1" /><path d="M241 109.4C243 109.8 244 112 243.6 115C242 114.6 240.6 113 241 109.4Z" fill="#3f78c0" /><rect x="228" y="116.8" width="16" height="4.4" fill="#fff200" /><path d="M250.0 112.0H255.0L252.5 115.0Z" fill="#666" /><text x="264.6" y="116.2" font-size="13.5" fill="#444" font-weight="400" >A</text><rect x="262" y="117.3" width="16" height="3.7" fill="#e60000" /><path d="M284.2 112.0H289.2L286.7 115.0Z" fill="#666" /><path d="M306 74.5H320" fill="none" stroke="#777" stroke-width="1" /><path d="M306 77.5H320" fill="none" stroke="#777" stroke-width="1" /><path d="M306 80.5H320" fill="none" stroke="#777" stroke-width="1" /><path d="M328 78.5H342" fill="none" stroke="#777" stroke-width="1" /><path d="M328 81.5H342" fill="none" stroke="#777" stroke-width="1" /><path d="M328 84.5H342" fill="none" stroke="#777" stroke-width="1" /><rect x="346" y="71" width="22" height="23" fill="#c6c6c6" /><path d="M350 83.5H364" fill="none" stroke="#666" stroke-width="1" /><path d="M350 86.5H364" fill="none" stroke="#666" stroke-width="1" /><path d="M350 89.5H364" fill="none" stroke="#666" stroke-width="1" /><text x="0" y="0" font-size="11.5" fill="#444" transform="translate(376.6,86.6) rotate(-48)">ab</text><path d="M380.5 88.4L389.5 79.4M385.8 79.2H389.7V83.2" fill="none" stroke="#444" stroke-width="1.1" /><path d="M394.2 80.9H399.2L396.7 83.9Z" fill="#666" /><rect x="427.5" y="74.5" width="9.5" height="4" fill="none" stroke="#777" stroke-width="1" /><path d="M429.5 76.5H441" fill="none" stroke="#3f78c0" stroke-width="1" /><rect x="427.5" y="81" width="9.5" height="7.5" fill="none" stroke="#777" stroke-width="1" /><path d="M429.5 83.5H435M429.5 86H435" fill="none" stroke="#3f78c0" stroke-width="1" /><path d="M443 78.5C443.6 81.5 442 83.3 438.2 83.3M440.3 81L437.8 83.3L440.3 85.6" fill="none" stroke="#3f78c0" stroke-width="1.1" /><path d="M306 108.5H320" fill="none" stroke="#777" stroke-width="1" /><path d="M328 108.5H342" fill="none" stroke="#777" stroke-width="1" /><path d="M350 108.5H364" fill="none" stroke="#777" stroke-width="1" /><path d="M306 111.5H316" fill="none" stroke="#777" stroke-width="1" /><path d="M330.5 111.5H339.5" fill="none" stroke="#777" stroke-width="1" /><path d="M354 111.5H364" fill="none" stroke="#777" stroke-width="1" /><path d="M306 114.5H320" fill="none" stroke="#777" stroke-width="1" /><path d="M328 114.5H342" fill="none" stroke="#777" stroke-width="1" /><path d="M350 114.5H364" fill="none" stroke="#777" stroke-width="1" /><path d="M306 117.5H316" fill="none" stroke="#777" stroke-width="1" /><path d="M330.5 117.5H339.5" fill="none" stroke="#777" stroke-width="1" /><path d="M354 117.5H364" fill="none" stroke="#777" stroke-width="1" /><path d="M374 106.5H390" fill="none" stroke="#777" stroke-width="1" /><path d="M374 118.5H390" fill="none" stroke="#777" stroke-width="1" /><path d="M382.5 109.5H390" fill="none" stroke="#777" stroke-width="1" /><path d="M382.5 112.5H390" fill="none" stroke="#777" stroke-width="1" /><path d="M382.5 115.5H390" fill="none" stroke="#777" stroke-width="1" /><path d="M396 106.5H412" fill="none" stroke="#777" stroke-width="1" /><path d="M396 118.5H412" fill="none" stroke="#777" stroke-width="1" /><path d="M404.5 109.5H412" fill="none" stroke="#777" stroke-width="1" /><path d="M404.5 112.5H412" fill="none" stroke="#777" stroke-width="1" /><path d="M404.5 115.5H412" fill="none" stroke="#777" stroke-width="1" /><path d="M381 112.5H374.8M377.8 109.6L374.8 112.5L377.8 115.4" fill="none" stroke="#3f78c0" stroke-width="1.7" /><path d="M396.2 112.5H402.4M399.4 109.6L402.4 112.5L399.4 115.4" fill="none" stroke="#3f78c0" stroke-width="1.7" /><rect x="427.8" y="105.8" width="13.6" height="13.6" fill="none" stroke="#777" stroke-width="1.3" /><path d="M427.8 108.6H441.4M427.8 116.6H441.4M434.6 105.8V108.6M434.6 116.6V119.4" fill="none" stroke="#777" stroke-width="1.2" /><path d="M430 112.6H439.2M431.8 110.9L430 112.6L431.8 114.3M437.4 110.9L439.2 112.6L437.4 114.3" fill="none" stroke="#3f78c0" stroke-width="1" /><path d="M449.0 112.0H454.0L451.5 115.0Z" fill="#666" /><rect x="471.5" y="105.5" width="15" height="8" fill="#fff" stroke="#3c6aa8" stroke-width="1.6" /><circle cx="478.6" cy="109.5" r="2" fill="#3c6aa8"/><ellipse cx="483" cy="112.5" rx="4.2" ry="1.5" fill="#ecc374" stroke="#f1f1f1" stroke-width="0.5"/><ellipse cx="483" cy="114.8" rx="4.2" ry="1.5" fill="#ecc374" stroke="#f1f1f1" stroke-width="0.5"/><ellipse cx="483" cy="117" rx="4.2" ry="1.5" fill="#ecc374" stroke="#f1f1f1" stroke-width="0.5"/><ellipse cx="478.5" cy="117.2" rx="4.2" ry="1.5" fill="#ecc374" stroke="#f1f1f1" stroke-width="0.5"/><ellipse cx="478.5" cy="119.5" rx="4.2" ry="1.5" fill="#ecc374" stroke="#f1f1f1" stroke-width="0.5"/><path d="M493.2 111.8H498.2L495.7 114.8Z" fill="#666" /><text x="506.6" y="118.9" font-size="15.5" fill="#444" font-weight="400" >%</text><text x="527.4" y="115.9" font-size="10.5" fill="#444" font-weight="400" letter-spacing="-0.85">000</text><text x="566.2" y="112.6" font-size="9.5" fill="#444" font-weight="400" >0</text><text x="559.6" y="120" font-size="9.5" fill="#444" font-weight="400" letter-spacing="-0.7">,00</text><path d="M564 108.5H558.6M560.8 106.3L558.6 108.5L560.8 110.7" fill="none" stroke="#3f78c0" stroke-width="1.3" /><text x="583.2" y="112.6" font-size="9.5" fill="#444" font-weight="400" letter-spacing="-0.7">,00</text><text x="587.3" y="120" font-size="9.5" fill="#444" font-weight="400" letter-spacing="-0.7">,0</text><path d="M580.5 116.5H586M583.8 114.3L586 116.5L583.8 118.7" fill="none" stroke="#3f78c0" stroke-width="1.3" /><rect x="638.5" y="68.5" width="27" height="24" fill="#fff" stroke="#8a8a8a" stroke-width="1" /><path d="M638.5 74.5H665.5M638.5 80.5H665.5M638.5 86.5H665.5M645.5 68.5V92.5M652.5 68.5V92.5M659.5 68.5V92.5" fill="none" stroke="#b4b4b4" stroke-width="1" /><rect x="646" y="69" width="6" height="5" fill="#e0623a" /><rect x="646" y="75" width="10.5" height="5" fill="#3f78c0" /><rect x="646" y="81" width="8.5" height="5" fill="#e0623a" /><rect x="646" y="87" width="3.8" height="5" fill="#3f78c0" /><rect x="652.5" y="85.5" width="15" height="12" fill="#fff" stroke="#8a8a8a" stroke-width="1" /><text x="656" y="95.6" font-size="11" fill="#333" font-weight="400" >≠</text><rect x="711.5" y="70.5" width="24" height="20" fill="#fff" stroke="#8a8a8a" stroke-width="1" /><rect x="717.5" y="75.5" width="18" height="15" fill="#c0d1e8" /><path d="M711.5 75.5H735.5M711.5 80.5H735.5M711.5 85.5H735.5M717.5 70.5V90.5M723.5 70.5V90.5M729.5 70.5V90.5" fill="none" stroke="#a8a8a8" stroke-width="1" /><path d="M740.2 74.8L740.4 82L734.3 90L729.8 86.4Z" fill="#7a7a7a" stroke="#f1f1f1" stroke-width="1" /><path d="M730 86.6L733.8 89.8L732.4 91.6L728.6 88.4Z" fill="#a8a8a8" /><path d="M728.3 88.6C724 88 721.5 93 717.4 97.8C724 98.4 731.4 97.4 732.2 91.8Z" fill="#3f78c0" stroke="#f1f1f1" stroke-width="1" /><path d="M726.2 91.4C728 90.4 730 92 729.6 94" fill="none" stroke="#e6eef9" stroke-width="1.6" /><rect x="766.5" y="68.5" width="25" height="21" fill="#fff" stroke="#8a8a8a" stroke-width="1" /><path d="M766.5 73.5H791.5M766.5 84.5H791.5M771.5 68.5V89.5M786.5 68.5V89.5" fill="none" stroke="#a8a8a8" stroke-width="1" /><rect x="772" y="74" width="14" height="10" fill="#c0d1e8" /><path d="M795.2 73.1L795.4 80.3L789.3 88.3L784.8 84.7Z" fill="#7a7a7a" stroke="#f1f1f1" stroke-width="1" /><path d="M785 84.89999999999999L788.8 88.1L787.4 89.89999999999999L783.6 86.7Z" fill="#a8a8a8" /><path d="M783.3 86.89999999999999C779 86.3 776.5 91.3 772.4 96.1C779 96.7 786.4 95.7 787.2 90.1Z" fill="#3f78c0" stroke="#f1f1f1" stroke-width="1" /><path d="M781.2 89.7C783 88.7 785 90.3 784.6 92.3" fill="none" stroke="#e6eef9" stroke-width="1.6" /><path d="M672.0 124.0H677.0L674.5 127.0Z" fill="#666" /><path d="M745.0 124.0H750.0L747.5 127.0Z" fill="#666" /><path d="M776.5 124.0H781.5L779 127.0Z" fill="#666" /><rect x="818.5" y="66.5" width="9" height="4" fill="#fff" stroke="#666" stroke-width="1" /><path d="M823 66.5V70.5" fill="none" stroke="#666" stroke-width="1" /><rect x="818.5" y="76.5" width="9" height="5" fill="#fff" stroke="#666" stroke-width="1" /><path d="M823 76.5V81.5M818.5 79H827.5" fill="none" stroke="#666" stroke-width="1" /><rect x="826.5" y="71.5" width="7.5" height="3.6" fill="#c9d8ec" stroke="#666" stroke-width="1" /><path d="M830.2 71.5V75" fill="none" stroke="#666" stroke-width="0.8" /><path d="M825 73.3H818.6M821.2 70.8L818.6 73.3L821.2 75.8" fill="none" stroke="#3f78c0" stroke-width="1.5" /><rect x="818.5" y="89.5" width="9" height="4" fill="#fff" stroke="#666" stroke-width="1" /><path d="M823 89.5V93.5" fill="none" stroke="#666" stroke-width="1" /><rect x="818.5" y="99.5" width="9" height="5" fill="#fff" stroke="#666" stroke-width="1" /><path d="M823 99.5V104.5M818.5 102H827.5" fill="none" stroke="#666" stroke-width="1" /><rect x="821.5" y="94.5" width="4.5" height="3.6" fill="#c9d8ec" stroke="#666" stroke-width="1" /><path d="M827.2 93L833.6 99.6M833.6 93L827.2 99.6" fill="none" stroke="#e0623a" stroke-width="1.4" /><path d="M818.5 112V115.4M832.5 112V115.4M820 113.7H831M821.5 112.2L820 113.7L821.5 115.2M829.5 112.2L831 113.7L829.5 115.2" fill="none" stroke="#3f78c0" stroke-width="1" /><rect x="818.5" y="117.5" width="14" height="9" fill="#fff" stroke="#666" stroke-width="1" /><path d="M818.5 120.5H832.5M818.5 123.5H832.5M822 117.5V126.5M825.5 117.5V126.5M829 117.5V126.5" fill="none" stroke="#9a9a9a" stroke-width="0.9" /><rect x="822" y="120.5" width="3.5" height="3" fill="#3f78c0" /><path d="M819 127.8H826M827 127.8H832" fill="none" stroke="#666" stroke-width="1" /><path d="M896.2 73.0H901.2L898.7 76.0Z" fill="#666" /><path d="M908.0 96.0H913.0L910.5 99.0Z" fill="#666" /><path d="M885.5 118.9H890.5L888 121.9Z" fill="#666" /><path d="M944.6 69.6V66.9H931.4L938.2 73.4L931.4 79.9H944.6V77.2" fill="none" stroke="#404040" stroke-width="1.7" stroke-linejoin="miter"/><path d="M952.1 72.9H957.1L954.6 75.9Z" fill="#666" /><rect x="931.5" y="89.5" width="13" height="15" fill="#fff" stroke="#8a8a8a" stroke-width="1" /><rect x="931" y="89" width="14" height="3.2" fill="#7a7a7a" /><path d="M938 94.5V101M935.2 98.3L938 101.1L940.8 98.3" fill="none" stroke="#3f78c0" stroke-width="1.6" /><path d="M950.1 96.0H955.1L952.6 99.0Z" fill="#666" /><path d="M939.5 113L944.8 118.3L938.3 124.8H935L931.4 121.2Z" fill="#e8879c" /><path d="M934.5 118L939.8 123.3" fill="none" stroke="#f4c3cd" stroke-width="1" /><path d="M935.4 125.3H945" fill="none" stroke="#8a8a8a" stroke-width="1" /><path d="M950.1 119.1H955.1L952.6 122.1Z" fill="#666" /><text x="979" y="80.1" font-size="15" fill="#3f78c0" font-weight="700" >A</text><text x="979.6" y="94.5" font-size="15" fill="#a05cc0" font-weight="700" >Z</text><path d="M991.2 76H1008.4L1001.6 83.2V90.8H998V83.2Z" fill="#7a7a7a" /><rect x="999.2" y="83.5" width="1.2" height="6" fill="#d8d8d8" /><circle cx="1063.2" cy="77.8" r="7.6" fill="#fff" stroke="#3f78c0" stroke-width="2.2"/><path d="M1057.6 83.6L1047.6 93.6" fill="none" stroke="#3f78c0" stroke-width="3.2" stroke-linecap="round"/><path d="M1012.3 123.1H1017.3L1014.8 126.1Z" fill="#666" /><path d="M1085.2 123.1H1090.2L1087.7 126.1Z" fill="#666" /><path d="M1245.5 146L1249.7 141.8L1253.9 146" fill="none" stroke="#666" stroke-width="1.5" /></svg>
</section>
</div></body></html>
